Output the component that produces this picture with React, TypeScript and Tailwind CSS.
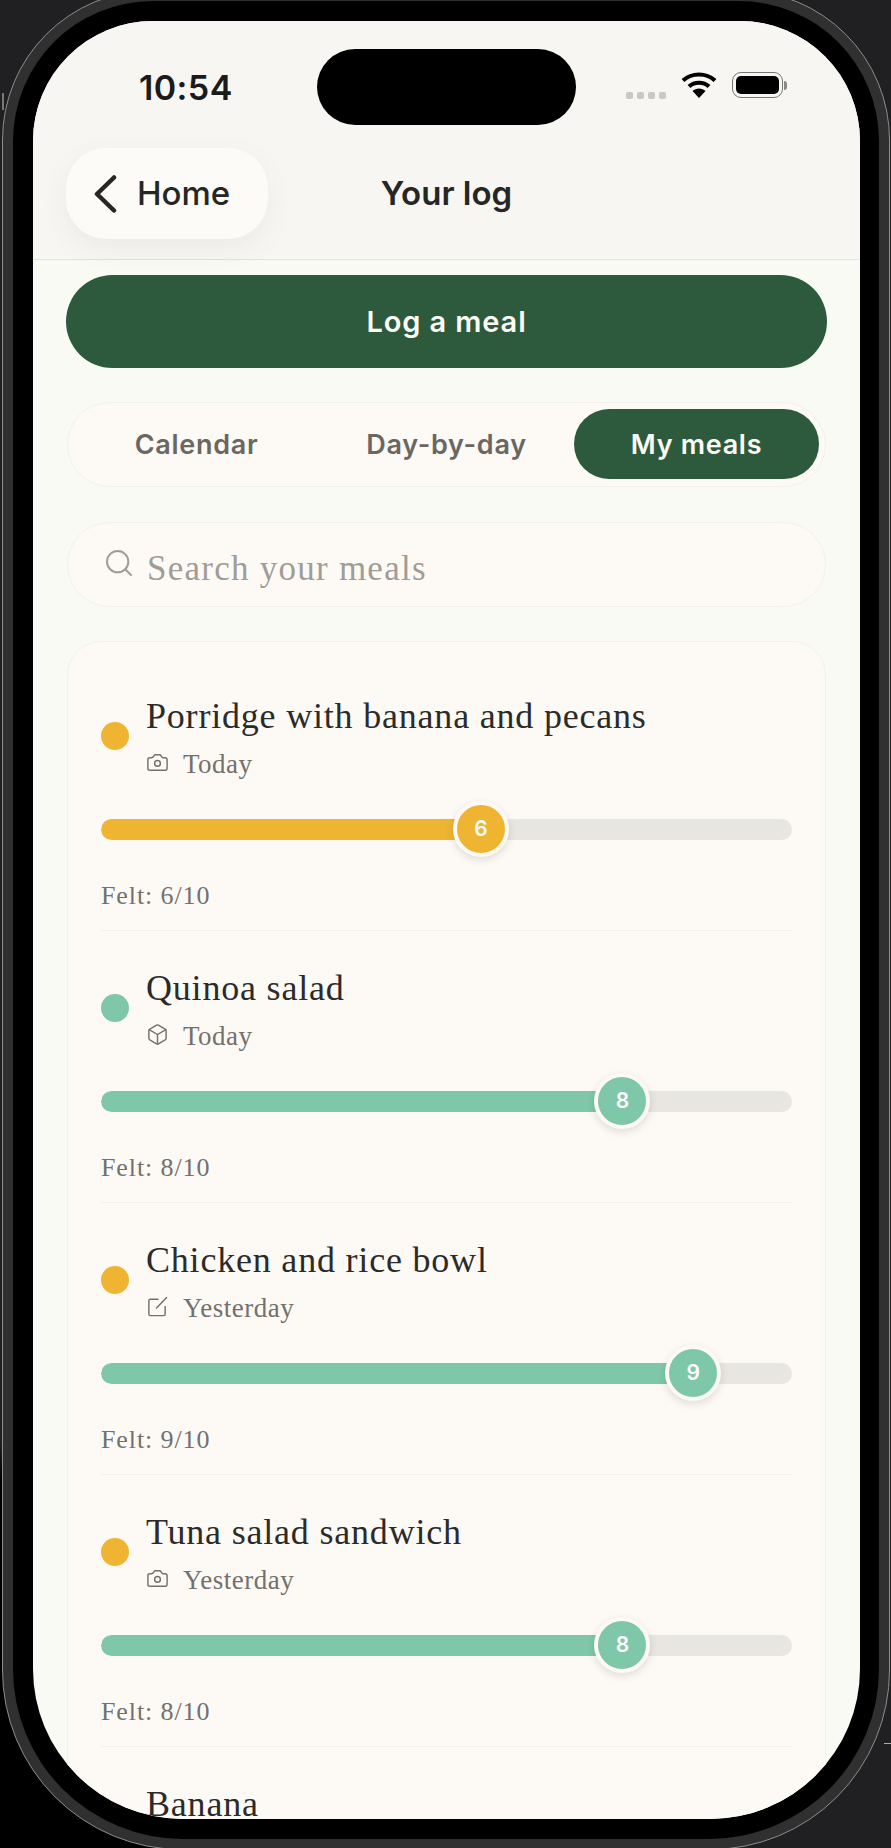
import { Box, Camera, Search } from "lucide-react";
import type { ComponentType } from "react";

const TRACK_W = 691;

type IconProps = { size?: number; strokeWidth?: number; className?: string };

// lucide's pen icon has a full pen body, the picture only has a thin line
function EditIcon({ size = 23, strokeWidth = 1.5, className }: IconProps) {
  return (
    <svg width={size} height={size} viewBox="0 0 24 24" fill="none" stroke="currentColor" strokeWidth={strokeWidth} strokeLinecap="round" strokeLinejoin="round" className={className}>
      <path d="M12.500 4.500H4.500a1.500 1.500 0 0 0-1.500 1.500v14a1.500 1.500 0 0 0 1.500 1.500h14a1.500 1.500 0 0 0 1.500-1.500v-8" />
      <path d="M11 13.500L21.500 2.500" />
    </svg>
  );
}

const MEALS: { name: string; when: string; icon: ComponentType<IconProps>; dot: string; fill: string; felt: number }[] = [
  { name: "Porridge with banana and pecans", when: "Today", icon: Camera, dot: "bg-[#f0b433]", fill: "bg-[#f0b433]", felt: 6 },
  { name: "Quinoa salad", when: "Today", icon: Box, dot: "bg-[#7fc7a9]", fill: "bg-[#7fc7a9]", felt: 8 },
  { name: "Chicken and rice bowl", when: "Yesterday", icon: EditIcon, dot: "bg-[#f0b433]", fill: "bg-[#7fc7a9]", felt: 9 },
  { name: "Tuna salad sandwich", when: "Yesterday", icon: Camera, dot: "bg-[#f0b433]", fill: "bg-[#7fc7a9]", felt: 8 },
  { name: "Banana", when: "Yesterday", icon: Camera, dot: "bg-[#7fc7a9]", fill: "bg-[#7fc7a9]", felt: 7 },
];

function StatusBar() {
  return (
    <div className="flex items-start pt-[28px] h-[127px]">
      <div className="w-[284px] h-[76px] pl-[106px] flex items-center font-['Inter',sans-serif] font-semibold text-[34px] tracking-[0.4px] text-[#1b1b1b]">
        10:54
      </div>
      <div className="w-[259px] h-[76px] rounded-full bg-black" />
      <div className="flex items-center ml-[50px] h-[52px] mt-[-2px] translate-y-[12px]">
        <div className="flex gap-[4px] mt-[20px]">
          <span className="w-[7px] h-[7px] rounded-[2px] bg-[#c9c8c5]" />
          <span className="w-[7px] h-[7px] rounded-[2px] bg-[#c9c8c5]" />
          <span className="w-[7px] h-[7px] rounded-[2px] bg-[#c9c8c5]" />
          <span className="w-[7px] h-[7px] rounded-[2px] bg-[#c9c8c5]" />
        </div>
        <svg width="36" height="28" viewBox="0 0 36 28" className="ml-[15px]">
          <path d="M2 9.500C11 1.500 25 1.500 34 9.500" fill="none" stroke="#000" strokeWidth="4.200" />
          <path d="M8 15.500C13.500 10.500 22.500 10.500 28 15.500" fill="none" stroke="#000" strokeWidth="4.200" />
          <path d="M11.500 20C15 16.500 21 16.500 24.500 20L18 27Z" fill="#000" />
        </svg>
        <div className="flex items-center ml-[15px]">
          <div className="w-[51px] h-[26px] rounded-[9px] border-[1.5px] border-[#77756f] p-[3px]">
            <div className="w-full h-full rounded-[5px] bg-black" />
          </div>
          <span className="w-[3px] h-[9px] ml-[1px] rounded-r-full bg-[#8a8883]" />
        </div>
      </div>
    </div>
  );
}

function NavBar() {
  return (
    <div className="grid grid-cols-[1fr_auto_1fr] items-center px-[33px] pb-[20px] font-['Inter',sans-serif] text-[#262624]">
      <button className="w-[202px] h-[91px] rounded-[40px] bg-[#fcfbf8] shadow-[0_10px_30px_rgba(0,0,0,0.05)] flex items-center pl-[27px]">
        <svg width="24" height="38" viewBox="0 0 24 38">
          <path d="M21 2.500L4 19L21 35.500" fill="none" stroke="#262624" strokeWidth="4.500" strokeLinecap="round" strokeLinejoin="round" />
        </svg>
        <span className="ml-[20px] text-[33px] font-medium leading-none">Home</span>
      </button>
      <div className="text-[33px] font-semibold leading-none">Your log</div>
      <div />
    </div>
  );
}

function MealRow({ meal, last }: { meal: (typeof MEALS)[number]; last: boolean }) {
  const Icon = meal.icon;
  const center = 26 + ((meal.felt - 1) / 9) * (TRACK_W - 54);
  return (
    <div className={`pt-[33px] pb-[16px] h-[272px] ${last ? "" : "border-b border-[#f4f1ec]"}`}>
      <div className="flex items-center">
        <span className={`w-[28px] h-[28px] rounded-full ${meal.dot}`} />
        <div className="ml-[17px]">
          <div className="h-[48px] leading-[48px] text-[36px] tracking-[0.8px] text-[#2b2b29]">{meal.name}</div>
          <div className="flex items-center h-[40px] mt-[-1px] text-[#74706b]">
            <Icon size={23} strokeWidth={1.5} className="translate-y-[3px]" />
            <span className="ml-[14px] text-[27px] tracking-[0.5px] translate-y-[5px]">{meal.when}</span>
          </div>
        </div>
      </div>
      <div className="relative flex items-center h-[56px] mt-[22px]">
        <div className="relative w-full h-[21px] rounded-full bg-[#e8e6e0] overflow-hidden">
          <div className={`h-full rounded-l-full ${meal.fill}`} style={{ width: center }} />
        </div>
        <div
          className={`absolute top-0 w-[56px] h-[56px] rounded-full border-4 border-[#fdfaf6] shadow-[0_3px_8px_rgba(0,0,0,0.12)] flex items-center justify-center text-white font-['Inter',sans-serif] font-semibold text-[21px] ${meal.fill}`}
          style={{ left: center - 28 }}
        >
          {meal.felt}
        </div>
      </div>
      <div className="mt-[21px] h-[36px] leading-[36px] text-[26px] tracking-[0.9px] text-[#74706b]">Felt: {meal.felt}/10</div>
    </div>
  );
}

export default function App() {
  return (
    <div className="relative w-[891px] h-[1848px] overflow-hidden pl-[2px] bg-[linear-gradient(to_top_right,#000_10%,#202022_11%)]">
      {/* side button marks */}
      <div className="absolute left-[2px] top-[93px] w-[2px] h-[17px] bg-[#777]" />
      <div className="absolute right-0 top-[1743px] w-[7px] h-px bg-[#aaa]" />
      <div className="w-[888px] h-[1860px] mt-[-10px] rounded-t-[150px] rounded-b-[180px] border border-[#8d8d8d] bg-[#303030] p-[10px]">
        <div className="h-full rounded-t-[140px] rounded-b-[170px] bg-black p-[20px]">
          <div className="w-[827px] h-[1798px] overflow-hidden rounded-t-[120px] rounded-b-[150px] bg-[#fafaf4]">
            <div className="bg-[#f7f6f2] border-b border-[#e2e1da]">
              <StatusBar />
              <NavBar />
            </div>
            <div className="px-[33px] pt-[15px] font-['Liberation_Serif',serif]">
              <button className="w-full h-[93px] rounded-full bg-[#2d5a3d] text-[#fbfaf5] font-['Inter',sans-serif] font-semibold text-[29px] tracking-[0.9px]">
                Log a meal
              </button>
              <div className="mt-[34px] mx-[1px] grid grid-cols-3 gap-[5px] pt-[6px] pb-[7px] px-[6px] rounded-full border border-[#f3f1ec] bg-[#fdfaf6] font-['Inter',sans-serif] font-semibold text-[27px] tracking-[0.7px] text-[#6a6763]">
                <button className="h-[70px] rounded-full pt-[3px]">Calendar</button>
                <button className="h-[70px] rounded-full pt-[3px]">Day-by-day</button>
                <button className="h-[70px] rounded-full pt-[3px] bg-[#2d5a3d] text-[#fbfaf5]">My meals</button>
              </div>
              <div className="mt-[35px] mx-[1px] h-[85px] rounded-full border border-[#f3f1ec] bg-[#fdfaf6] flex items-center pl-[35px] text-[#a09c96]">
                <Search size={32} strokeWidth={1.5} className="-translate-y-[2px]" />
                <input
                  placeholder="Search your meals"
                  className="ml-[12px] flex-1 bg-transparent outline-none text-[35px] tracking-[1.25px] translate-y-[5px] placeholder:text-[#a09c96]"
                />
              </div>
              <div className="mt-[34px] mx-[1px] rounded-t-[34px] border border-[#f3f1ec] bg-[#fdfaf6] px-[33px] pt-[17px]">
                {MEALS.map((meal, i) => (
                  <MealRow key={meal.name} meal={meal} last={i === MEALS.length - 1} />
                ))}
              </div>
            </div>
          </div>
        </div>
      </div>
    </div>
  );
}
